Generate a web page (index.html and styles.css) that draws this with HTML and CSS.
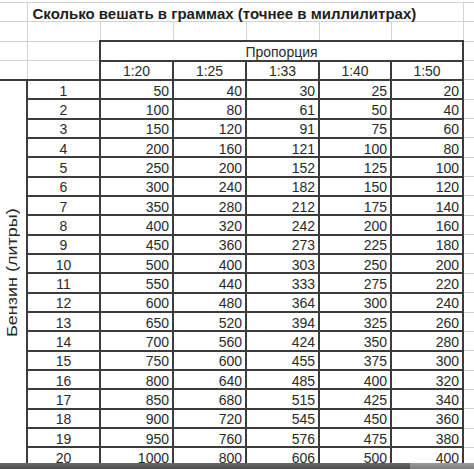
FILE: index.html
```html
<!DOCTYPE html>
<html lang="ru">
<head>
<meta charset="utf-8">
<title>Сколько вешать в граммах</title>
<link rel="stylesheet" href="styles.css">
</head>
<body>
<div class="sheet">
<table class="grid">
<colgroup>
<col class="c-label"><col class="c-num"><col class="c-val"><col class="c-val"><col class="c-val"><col class="c-val2"><col class="c-val2"><col class="c-rest">
</colgroup>
<tr><td class="first"></td><td class="title" colspan="6">Сколько вешать в граммах (точнее в миллилитрах)</td><td></td></tr>
<tr><td class="first"></td><td></td><td></td><td></td><td></td><td></td><td></td><td></td></tr>
<tr><td class="first"></td><td></td><td class="hdr" colspan="5">Пропорция</td><td></td></tr>
<tr><td class="first"></td><td></td><td class="hdr">1:20</td><td class="hdr">1:25</td><td class="hdr">1:33</td><td class="hdr">1:40</td><td class="hdr">1:50</td><td></td></tr>
<tr><td class="label" rowspan="20"><span class="vtext">Бензин (литры)</span></td><td class="n">1</td><td class="v">50</td><td class="v">40</td><td class="v">30</td><td class="v">25</td><td class="v">20</td><td></td></tr>
<tr><td class="n">2</td><td class="v">100</td><td class="v">80</td><td class="v">61</td><td class="v">50</td><td class="v">40</td><td></td></tr>
<tr><td class="n">3</td><td class="v">150</td><td class="v">120</td><td class="v">91</td><td class="v">75</td><td class="v">60</td><td></td></tr>
<tr><td class="n">4</td><td class="v">200</td><td class="v">160</td><td class="v">121</td><td class="v">100</td><td class="v">80</td><td></td></tr>
<tr><td class="n">5</td><td class="v">250</td><td class="v">200</td><td class="v">152</td><td class="v">125</td><td class="v">100</td><td></td></tr>
<tr><td class="n">6</td><td class="v">300</td><td class="v">240</td><td class="v">182</td><td class="v">150</td><td class="v">120</td><td></td></tr>
<tr><td class="n">7</td><td class="v">350</td><td class="v">280</td><td class="v">212</td><td class="v">175</td><td class="v">140</td><td></td></tr>
<tr><td class="n">8</td><td class="v">400</td><td class="v">320</td><td class="v">242</td><td class="v">200</td><td class="v">160</td><td></td></tr>
<tr><td class="n">9</td><td class="v">450</td><td class="v">360</td><td class="v">273</td><td class="v">225</td><td class="v">180</td><td></td></tr>
<tr><td class="n">10</td><td class="v">500</td><td class="v">400</td><td class="v">303</td><td class="v">250</td><td class="v">200</td><td></td></tr>
<tr><td class="n">11</td><td class="v">550</td><td class="v">440</td><td class="v">333</td><td class="v">275</td><td class="v">220</td><td></td></tr>
<tr><td class="n">12</td><td class="v">600</td><td class="v">480</td><td class="v">364</td><td class="v">300</td><td class="v">240</td><td></td></tr>
<tr><td class="n">13</td><td class="v">650</td><td class="v">520</td><td class="v">394</td><td class="v">325</td><td class="v">260</td><td></td></tr>
<tr><td class="n">14</td><td class="v">700</td><td class="v">560</td><td class="v">424</td><td class="v">350</td><td class="v">280</td><td></td></tr>
<tr><td class="n">15</td><td class="v">750</td><td class="v">600</td><td class="v">455</td><td class="v">375</td><td class="v">300</td><td></td></tr>
<tr><td class="n">16</td><td class="v">800</td><td class="v">640</td><td class="v">485</td><td class="v">400</td><td class="v">320</td><td></td></tr>
<tr><td class="n">17</td><td class="v">850</td><td class="v">680</td><td class="v">515</td><td class="v">425</td><td class="v">340</td><td></td></tr>
<tr><td class="n">18</td><td class="v">900</td><td class="v">720</td><td class="v">545</td><td class="v">450</td><td class="v">360</td><td></td></tr>
<tr><td class="n">19</td><td class="v">950</td><td class="v">760</td><td class="v">576</td><td class="v">475</td><td class="v">380</td><td></td></tr>
<tr><td class="n">20</td><td class="v">1000</td><td class="v">800</td><td class="v">606</td><td class="v">500</td><td class="v">400</td><td></td></tr>
</table>
<div class="bar"><div class="bar-main"></div><div class="bar-mark"></div></div>
</div>
</body>
</html>
```
FILE: styles.css
```css
html, body {
  margin: 0;
  padding: 0;
  background: #ffffff;
}
body {
  width: 474px;
  height: 469px;
  overflow: hidden;
  font-family: "Liberation Sans", Arial, sans-serif;
  color: #2a2a2a;
}
.sheet {
  position: relative;
  width: 474px;
  height: 469px;
  overflow: hidden;
  padding-top: 2px;
  box-sizing: border-box;
}
.grid {
  border-collapse: collapse;
  table-layout: fixed;
  width: 474px;
  font-size: 14px;
}
.c-label { width: 27px; }
.c-num { width: 73px; }
.c-val { width: 73px; }
.c-val2 { width: 72px; }
.c-rest { width: 11px; }
.grid tr { height: 19.35px; }
.grid td {
  border: 1px solid #d2d2d2;
  padding: 0 3px;
  line-height: 14px;
  vertical-align: middle;
  white-space: nowrap;
  overflow: visible;
}
.grid td.first { border-left: 0; }
.grid td.title {
  font-weight: bold;
  font-size: 15px;
  padding-left: 5px;
  padding-top: 4px;
  text-align: left;
  color: #1e1e1e;
}
.grid td.hdr {
  border: 2px solid #3c3c3c;
  text-align: center;
  padding-top: 2px;
}
.grid td.n {
  border: 2px solid #3c3c3c;
  text-align: center;
  padding-top: 2px;
}
.grid td.v {
  border: 2px solid #3c3c3c;
  text-align: right;
  padding-top: 2px;
}
.grid td.label {
  border-left: 0;
  border-top: 2px solid #3c3c3c;
  border-right: 2px solid #3c3c3c;
  border-bottom: 0;
  text-align: center;
  padding: 0 3px 0 0;
}
.vtext {
  display: inline-block;
  writing-mode: vertical-rl;
  transform: rotate(180deg) scaleY(1.2);
  font-size: 15px;
  line-height: 16px;
}
.bar {
  position: absolute;
  left: 0;
  right: 0;
  bottom: 0;
  height: 6px;
  display: flex;
}
.bar-main {
  flex: 1;
  background: linear-gradient(#6a6a6a, #4a4a4a);
}
.bar-mark {
  width: 64px;
  background: linear-gradient(#9a9a9a, #7d7d7d);
}
```
